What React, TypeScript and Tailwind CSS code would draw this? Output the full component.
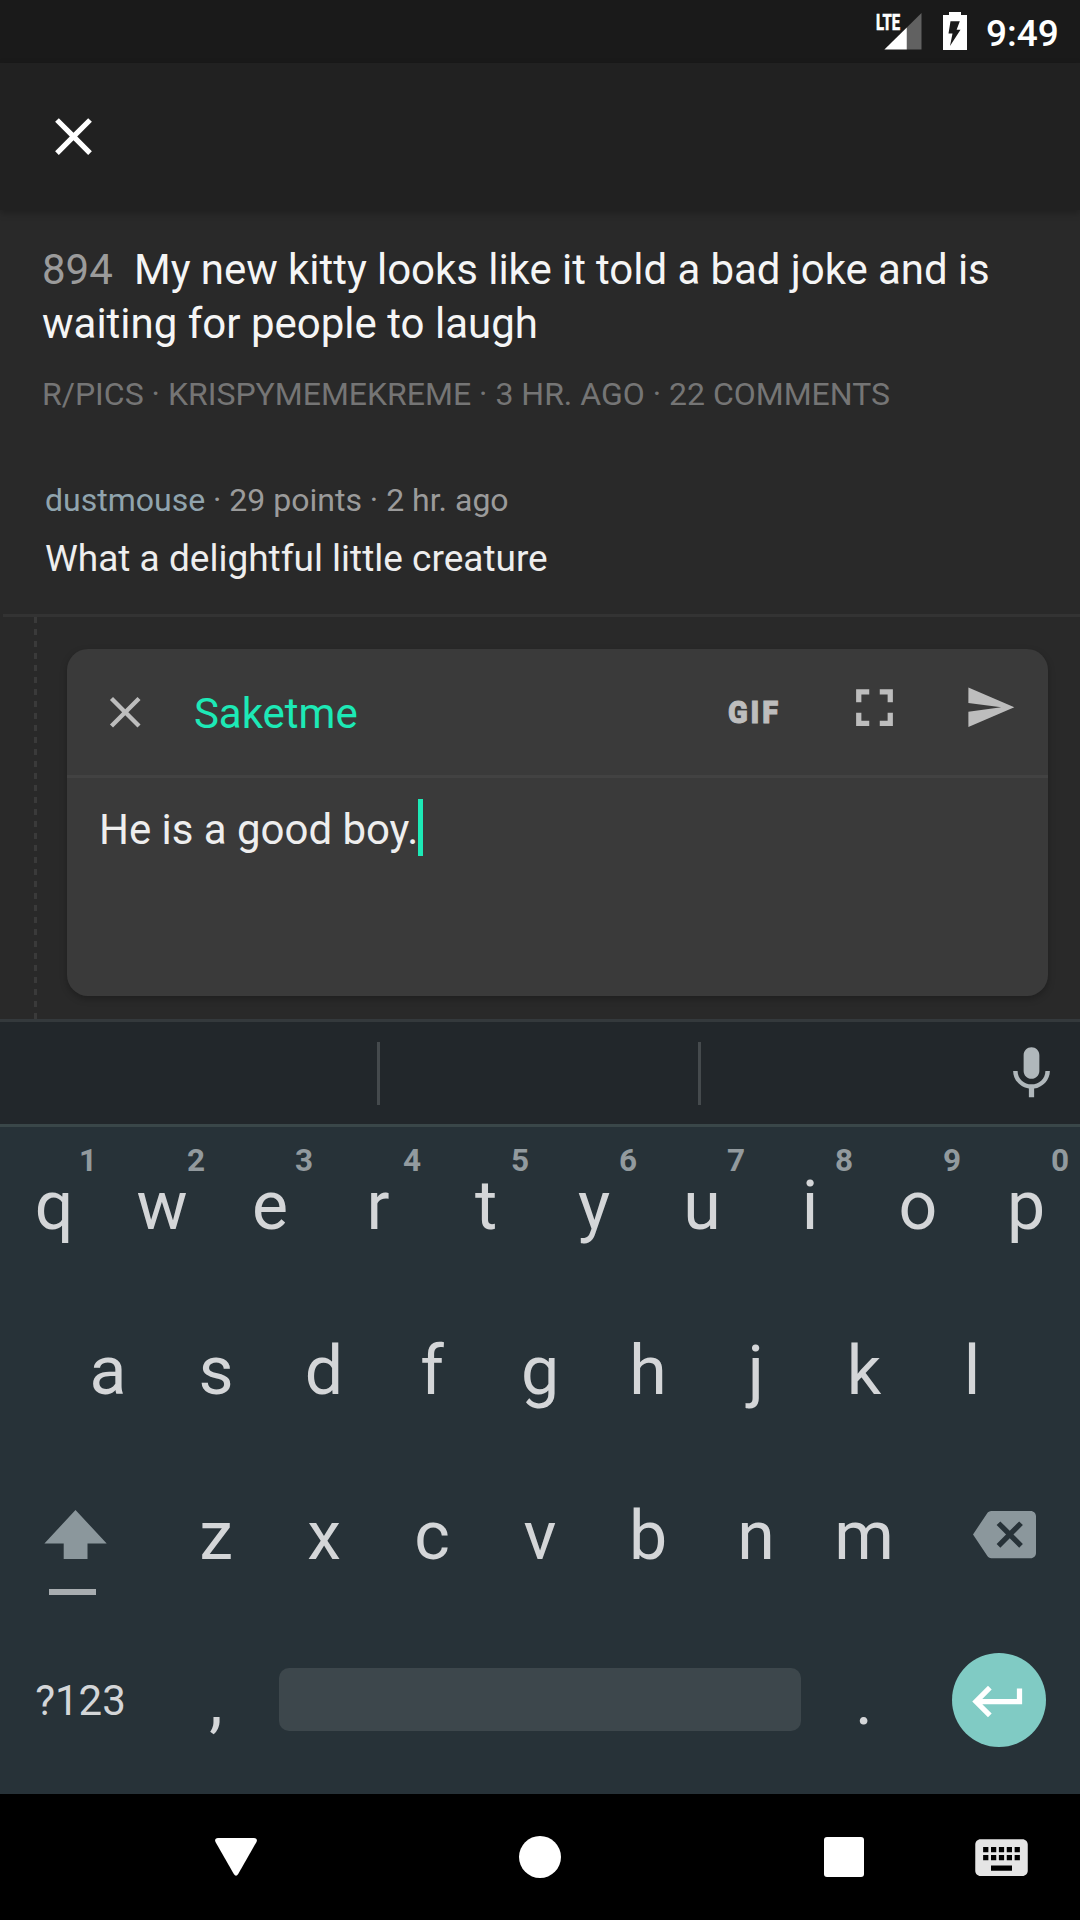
import React from "react";
import {
  MdBackspace,
  MdClose,
  MdFullscreen,
  MdKeyboard,
  MdKeyboardReturn,
  MdSend,
} from "react-icons/md";

const TOP_ROW = ["q", "w", "e", "r", "t", "y", "u", "i", "o", "p"];
const HOME_ROW = ["a", "s", "d", "f", "g", "h", "j", "k", "l"];
const BOTTOM_ROW = ["z", "x", "c", "v", "b", "n", "m"];

function StatusBar() {
  return (
    <div className="flex h-[63px] items-start bg-[#1a1a1a] text-white">
      <div className="relative mt-[12px] ml-[876px] h-[38px] w-[46px]">
        <svg className="absolute inset-0" width="46" height="38" viewBox="0 0 46 38">
          <path d="M45.500 1V37.5H30.8V15.500z" fill="#616161" />
          <path d="M30.8 15.500V37.5H8.4z" fill="#fff" />
        </svg>
        <span className="absolute top-[-2px] left-0 origin-left scale-x-[0.66] text-[22.5px] leading-[24px] font-extrabold [-webkit-text-stroke:0.5px_white]">
          LTE
        </span>
      </div>
      <svg className="mt-[12px] ml-[21px]" width="24" height="38" viewBox="0 0 24 38">
        <path d="M6 0H18V3H24V38H0V3H6z" fill="#fff" />
        <path d="M7.5 9.3H16.8L13.6 17.8H17.5L7 34L9.500 21.500H5.500z" fill="#1a1a1a" />
      </svg>
      <span className="mt-[11px] ml-[19px] text-[37px] leading-[46px] font-medium">9:49</span>
    </div>
  );
}

function Submission() {
  return (
    <div className="h-[246px] pt-[33px] pl-[42px]">
      <h1 className="text-[42px] leading-[54px] whitespace-nowrap text-[#f5f5f5]">
        <span className="[word-spacing:-0.25px]">
          <span className="mr-[11px] text-[#9b9b9b]">894</span> My new kitty looks like it told a bad
          joke and is
        </span>
        <br />
        waiting for people to laugh
      </h1>
      <p className="mt-[21px] text-[32px] leading-[44px] whitespace-nowrap text-[#757575]">
        R/PICS · KRISPYMEMEKREME · 3 HR. AGO · 22 COMMENTS
      </p>
    </div>
  );
}

function Comment() {
  return (
    <div className="ml-[3px] h-[161px] border-b-[3px] border-[#333333] pt-[22px] pl-[42px]">
      <p className="text-[32px] leading-[44px] whitespace-nowrap text-[#9b9b9b]">
        <span className="text-[#90a4ae]">dustmouse</span> · 29 points · 2 hr. ago
      </p>
      <p className="mt-[12px] text-[37px] leading-[50px] whitespace-nowrap text-[#eeeeee]">
        What a delightful little creature
      </p>
    </div>
  );
}

function ReplyBox() {
  return (
    <div className="flex h-[402px]">
      <div className="ml-[34px] w-[3px] bg-[repeating-linear-gradient(180deg,#3a3a3a_0px,#3a3a3a_6px,transparent_6px,transparent_12px)]" />
      <div className="mt-[32px] ml-[30px] h-[347px] w-[981px] rounded-[21px] bg-[#3a3a3a] shadow-[0_3px_7px_rgba(0,0,0,0.25)]">
        <div className="flex h-[129px] border-b-[3px] border-[#424242] text-[#bdbdbd]">
          <MdClose className="mt-[36.7px] ml-[32px] size-[52.5px]" />
          <span className="mt-[37px] ml-[42.4px] w-[492px] text-[42px] leading-[56px] text-[#1de9b6]">
            Saketme
          </span>
          <span className="mt-[46px] ml-[42px] w-[83px] origin-left scale-x-[0.95] text-[30.5px] leading-[36px] font-black tracking-[3px] [-webkit-text-stroke:1px_#bdbdbd]">
            GIF
          </span>
          <MdFullscreen className="mt-[27px] ml-[32px] size-[63px]" />
          <MdSend className="mt-[32px] ml-[58px] size-[52.5px]" />
        </div>
        <div className="flex pt-[21px] pl-[31px]">
          <span className="mt-[2px] -mb-[2px] w-[320px] pl-px text-[42px] leading-[57px] tracking-[-0.03px] whitespace-nowrap text-[#eeeeee]">
            He is a good boy.
          </span>
          <span className="h-[57px] w-[5px] bg-[#1de9b6]" />
        </div>
      </div>
    </div>
  );
}

function SuggestionStrip() {
  return (
    <div className="flex h-[108px] border-t-[3px] border-b-[3px] border-t-[#34393c] border-b-[#3a4749] bg-[#22272b] pt-[20px]">
      <div className="ml-[377px] h-[63px] w-[3px] bg-[#454a4d]" />
      <div className="ml-[318px] h-[63px] w-[3px] bg-[#454a4d]" />
      <svg className="ml-[299px] size-[63px]" viewBox="0 0 24 24" fill="#b0b7bb">
        <path d="M12 14c1.66 0 2.99-1.34 2.99-3L15 5c0-1.66-1.34-3-3-3S9 3.34 9 5v6c0 1.66 1.34 3 3 3zm5.3-3c0 3-2.54 5.1-5.3 5.1S6.7 14 6.7 11H5c0 3.41 2.72 6.23 6 6.72V21h2v-3.28c3.28-.48 6-3.3 6-6.72h-1.7z" />
      </svg>
    </div>
  );
}

function Key({ label, hint }: { label: string; hint?: string }) {
  return (
    <div className="relative h-[165px] w-[108px] pt-[32px] text-center text-[68px] leading-[80px]">
      {label}
      {hint && (
        <span className="absolute top-[9px] left-[68px] w-[40px] text-center text-[31.5px] leading-[36px] font-bold text-[#929a9e]">
          {hint}
        </span>
      )}
    </div>
  );
}

function Keyboard() {
  return (
    <div className="h-[667px] bg-[#273238] pt-[7px] text-[#d4d6d8]">
      <div className="flex">
        {TOP_ROW.map((k, i) => (
          <Key key={k} label={k} hint={String((i + 1) % 10)} />
        ))}
      </div>
      <div className="flex justify-center">
        {HOME_ROW.map((k) => (
          <Key key={k} label={k} />
        ))}
      </div>
      <div className="flex">
        <div className="w-[162px] pt-[46px] pl-[44px]">
          <svg width="63" height="86" viewBox="0 0 63 86">
            <path d="M31.5 0L62.7 33.5H43.5V49H19.7V33.5H.4z" fill="#8b979c" />
            <path d="M5 79H52V85H5z" fill="#a8adb0" />
          </svg>
        </div>
        {BOTTOM_ROW.map((k) => (
          <Key key={k} label={k} />
        ))}
        <MdBackspace className="mt-[39px] ml-[55px] size-[63px] text-[#8b979c]" />
      </div>
      <div className="flex">
        <div className="w-[162px] pt-[48px] pr-px text-center text-[42px] leading-[48px]">?123</div>
        <Key label="," />
        <div className="mt-[39px] ml-[9px] h-[63px] w-[522px] rounded-[10px] bg-[#3d474c]" />
        <div className="ml-[9px]">
          <Key label="." />
        </div>
        <div className="mt-[23.500px] ml-[33.500px] flex size-[94.5px] items-center justify-center rounded-full bg-[#80cbc4] pt-[4px]">
          <MdKeyboardReturn className="size-[63px] text-white" />
        </div>
      </div>
    </div>
  );
}

function NavigationBar() {
  return (
    <div className="flex h-[126px] items-start bg-black">
      <svg className="mt-[44px] ml-[215px]" width="42" height="38" viewBox="0 0 42 38">
        <path
          d="M3 0H39Q43 .4 41.500 4L23.200 36Q21 39.500 18.800 36L.5 4Q-1 .4 3 0z"
          fill="#fff"
        />
      </svg>
      <div className="mt-[42px] ml-[262px] size-[42px] rounded-full bg-white" />
      <div className="mt-[43px] ml-[263px] size-[40px] rounded-[3px] bg-white" />
      <MdKeyboard className="mt-[31.500px] ml-[106px] size-[63px] text-[#e5e5e5]" />
    </div>
  );
}

export default function App() {
  return (
    <div className="h-[1920px] w-[1080px] overflow-hidden bg-[#292929] font-[Roboto,sans-serif]">
      <StatusBar />
      <header className="flex h-[147px] items-center bg-[#212121] pl-[42px] shadow-[0_3px_7px_rgba(0,0,0,0.25)]">
        <MdClose className="size-[63px] text-white" />
      </header>
      <Submission />
      <Comment />
      <ReplyBox />
      <SuggestionStrip />
      <Keyboard />
      <NavigationBar />
    </div>
  );
}
